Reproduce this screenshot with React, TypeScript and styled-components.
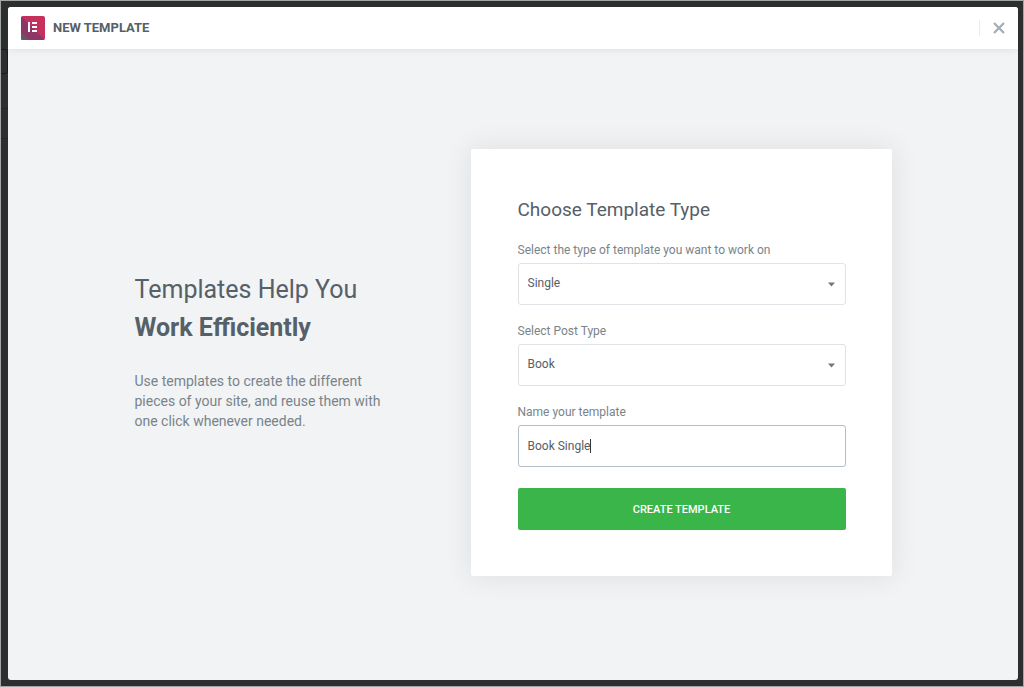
import React, { useState } from "react";
import styled, { createGlobalStyle } from "styled-components";

const GlobalStyle = createGlobalStyle`
  *, *::before, *::after { box-sizing: border-box; }
  body {
    margin: 0;
    background: #2d2e2e;
    color: #556068;
    font-family: Roboto, "Liberation Sans", sans-serif;
  }
`;

const Backdrop = styled.div`
  position: relative;
  display: flex;
  min-height: 100vh;
  padding: 6px 5px 6px 7px;
  border: 1px solid #a3a6a6;
  background: #2d2e2e;

  /* edge of the dimmed page's controls, showing beside the dialog */
  &::before {
    content: "";
    position: absolute;
    left: 0;
    top: 48px;
    width: 7px;
    height: 25px;
    border: 1px solid #191c1d;
    border-left: 0;
    border-radius: 0 3px 3px 0;
  }

  &::after {
    content: "";
    position: absolute;
    left: 0;
    top: 107px;
    width: 7px;
    height: 31px;
    border: 1px solid #222424;
    border-width: 1px 0;
  }
`;

const Dialog = styled.section`
  flex: 1;
  display: flex;
  flex-direction: column;
  border-radius: 3px;
  background: #f1f3f5;
  overflow: hidden;
`;

const Header = styled.header`
  display: flex;
  align-items: center;
  height: 42px;
  padding: 0 13px;
  background: #fff;
  box-shadow: 0 0 8px rgba(0, 0, 0, 0.1);
`;

const HeaderTitle = styled.h1`
  flex: 1;
  margin: 0 0 0 8px;
  font-size: 13px;
  line-height: 20px;
  font-weight: 700;
  text-transform: uppercase;
`;

const CloseButton = styled.button`
  display: flex;
  align-items: center;
  height: 16px;
  padding: 0 0 0 13px;
  border: 0;
  border-left: 1px solid #e9ecee;
  background: none;
  color: #a4afb7;
  cursor: pointer;
`;

const Content = styled.main`
  flex: 1;
  display: flex;
  align-items: center;
  justify-content: center;
  padding: 24px 24px 28px;
`;

const Columns = styled.div`
  flex: 0 1 757px;
  display: flex;
  flex-wrap: wrap;
  align-items: center;
  justify-content: space-between;
  gap: 24px;
`;

const Intro = styled.div`
  flex: 0 1 248px;
  padding-bottom: 24px;
`;

const IntroTitle = styled.h2`
  margin: 0 0 24px;
  font-size: 25px;
  line-height: 38px;
  font-weight: 400;

  strong {
    display: block;
    font-weight: 700;
  }
`;

const IntroText = styled.p`
  margin: 0;
  color: #79848a;
  font-size: 14px;
  line-height: 20px;
`;

const Card = styled.form`
  flex: 0 1 421px;
  display: flex;
  flex-direction: column;
  padding: 47px 46px 46px 47px;
  border-radius: 2px;
  background: #fff;
  box-shadow: 0 0 28px 2px rgba(0, 0, 0, 0.08);
`;

const CardTitle = styled.h3`
  margin: 0 0 17px;
  font-size: 19px;
  line-height: 28px;
  font-weight: 400;
`;

const Field = styled.div`
  display: flex;
  flex-direction: column;
  gap: 4px;
  margin-bottom: 17px;
`;

const Label = styled.label`
  color: #79848a;
  font-size: 12px;
  line-height: 18px;
`;

const Control = styled.div<{ $focused?: boolean }>`
  display: flex;
  align-items: center;
  position: relative;
  height: 42px;
  border: 1px solid ${(p) => (p.$focused ? "#b4bec4" : "#dfe2e6")};
  border-radius: 3px;
  background: #fff;
`;

const Select = styled.select`
  flex: 1;
  height: 40px;
  padding: 0 32px 2px 9px;
  border: 0;
  outline: 0;
  appearance: none;
  background: none;
  color: #556068;
  font: 12px Roboto, "Liberation Sans", sans-serif;
`;

const Arrow = styled.svg`
  position: absolute;
  right: 9px;
  top: 18px;
  pointer-events: none;
`;

const TextInput = styled.input`
  field-sizing: content;
  max-width: 100%;
  height: 40px;
  padding: 0 0 0 9px;
  border: 0;
  outline: 0;
  background: none;
  color: #556068;
  caret-color: transparent;
  font: 12px Roboto, "Liberation Sans", sans-serif;
`;

const Caret = styled.span`
  width: 1px;
  height: 14px;
  background: #30363a;
`;

const SubmitButton = styled.button`
  height: 42px;
  margin-top: 4px;
  border: 0;
  border-radius: 2px;
  background: #39b54a;
  color: #fff;
  font: 500 11px Roboto, "Liberation Sans", sans-serif;
  text-transform: uppercase;
  cursor: pointer;
`;

function Logo() {
  return (
    <svg width="24" height="24" viewBox="0 0 24 24" aria-hidden="true">
      <defs>
        <clipPath id="logo-shape">
          <rect width="24" height="24" rx="2" />
        </clipPath>
      </defs>
      <g clipPath="url(#logo-shape)">
        <rect width="24" height="24" fill="#c5305c" />
        <path d="M0 0L24 24H0Z" fill="#8c3765" />
        <path d="M0 16L8 24H0Z" fill="#65585f" />
      </g>
      <path d="M7 6h2v10H7zM11 6h5v2h-5zM11 10h5v2h-5zM11 14h5v2h-5z" fill="#fff" />
    </svg>
  );
}

function DropArrow() {
  return (
    <Arrow width="9" height="5" viewBox="0 0 9 5" aria-hidden="true">
      <path d="M1 0.5h7L4.5 4.5z" fill="#6d7882" />
    </Arrow>
  );
}

export default function App() {
  const [name, setName] = useState("Book Single");

  return (
    <>
      <GlobalStyle />
      <Backdrop>
        <Dialog role="dialog" aria-labelledby="dialog-title">
          <Header>
            <Logo />
            <HeaderTitle id="dialog-title">New Template</HeaderTitle>
            <CloseButton type="button" aria-label="Close">
              <svg width="12" height="12" viewBox="0 0 12 12" aria-hidden="true">
                <path d="M1 1l10 10M11 1L1 11" stroke="currentColor" strokeWidth="2.4" />
              </svg>
            </CloseButton>
          </Header>
          <Content>
            <Columns>
              <Intro>
                <IntroTitle>
                  Templates Help You <strong>Work Efficiently</strong>
                </IntroTitle>
                <IntroText>
                  Use templates to create the different pieces of your site, and reuse them with
                  one click whenever needed.
                </IntroText>
              </Intro>
              <Card onSubmit={(e) => e.preventDefault()}>
                <CardTitle>Choose Template Type</CardTitle>
                <Field>
                  <Label htmlFor="template-type">
                    Select the type of template you want to work on
                  </Label>
                  <Control>
                    <Select id="template-type" defaultValue="Single">
                      <option>Single</option>
                    </Select>
                    <DropArrow />
                  </Control>
                </Field>
                <Field>
                  <Label htmlFor="post-type">Select Post Type</Label>
                  <Control>
                    <Select id="post-type" defaultValue="Book">
                      <option>Book</option>
                    </Select>
                    <DropArrow />
                  </Control>
                </Field>
                <Field>
                  <Label htmlFor="template-name">Name your template</Label>
                  <Control $focused>
                    <TextInput
                      id="template-name"
                      type="text"
                      value={name}
                      onChange={(e) => setName(e.target.value)}
                    />
                    <Caret />
                  </Control>
                </Field>
                <SubmitButton type="submit">Create Template</SubmitButton>
              </Card>
            </Columns>
          </Content>
        </Dialog>
      </Backdrop>
    </>
  );
}
